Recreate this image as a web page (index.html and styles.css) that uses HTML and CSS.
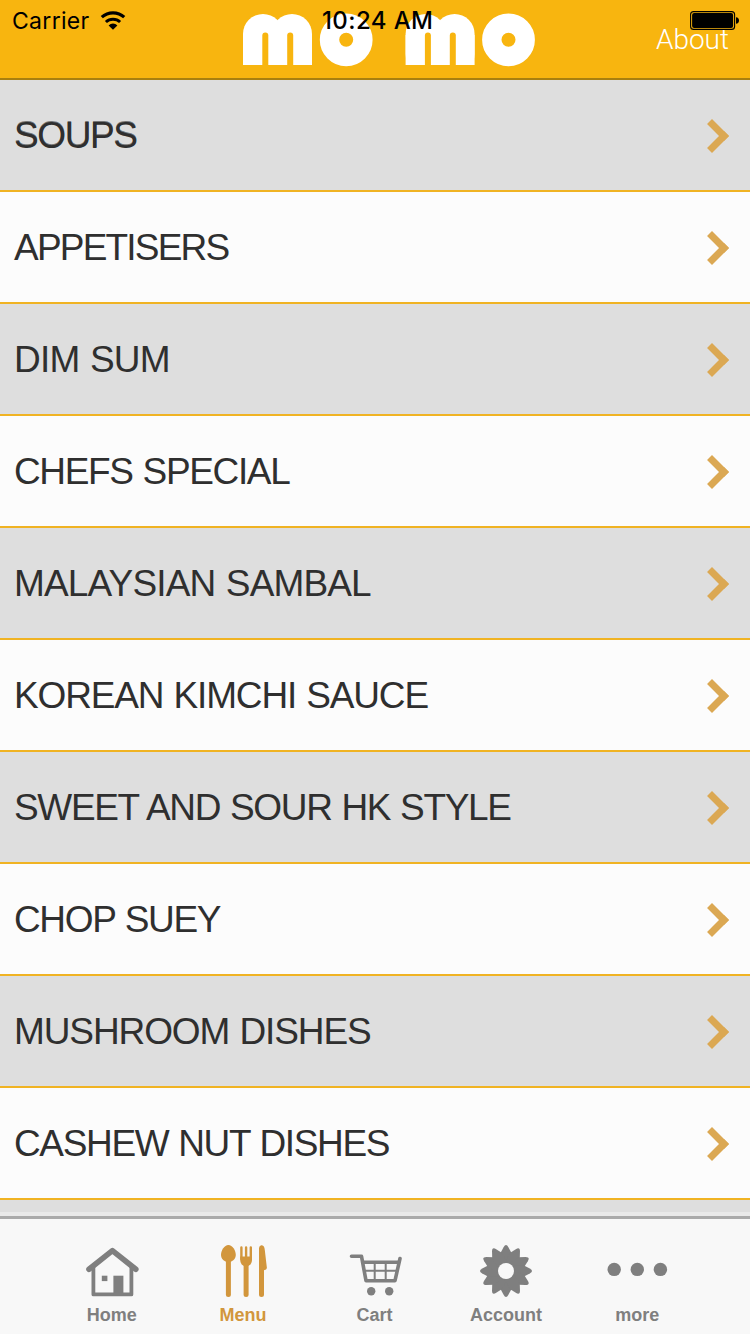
FILE: index.html
```
<!DOCTYPE html>
<html lang="en">
<head>
  <meta charset="UTF-8">
  <title>Momo Menu</title>
  <link rel="stylesheet" href="styles.css">
</head>
<body>

  <div class="app">
    <header class="navbar">
      <svg class="logo" width="293" height="54" viewBox="0 0 293 54" role="img" aria-label="momo">
        <defs>
          <g id="arch">
            <rect x="0" y="1" width="40" height="60" rx="20" fill="#fff"/>
            <rect x="29" y="1" width="40" height="60" rx="20" fill="#fff"/>
            <rect x="0" y="22" width="69" height="30" fill="#fff"/>
            <rect x="19.3" y="19.5" width="6" height="42" rx="3" fill="#f8b50f"/>
            <rect x="44.2" y="19.5" width="6" height="42" rx="3" fill="#f8b50f"/>
            <rect x="-1" y="52" width="71" height="10" fill="#f8b50f"/>
          </g>
        </defs>
        <use href="#arch"/>
        <circle cx="103.2" cy="26.8" r="16.7" fill="none" stroke="#fff" stroke-width="19.4"/>
        <use href="#arch" x="162.6"/>
        <circle cx="265.5" cy="26.8" r="16.7" fill="none" stroke="#fff" stroke-width="19.4"/>
      </svg>
      <a class="about">About</a>
    </header>

    <div class="statusbar">
      <span class="carrier">Carrier</span>
      <svg class="wifi" width="26" height="20" viewBox="0 0 26 20">
        <path d="M1.8 6.2A16.5 16.5 0 0 1 24.2 6.2" fill="none" stroke="#000" stroke-width="3.2"/>
        <path d="M5.9 11A10.4 10.4 0 0 1 20.1 11" fill="none" stroke="#000" stroke-width="3"/>
        <path d="M8.6 14.4A6.2 6.2 0 0 1 17.4 14.4L13 18.8Z" fill="#000"/>
      </svg>
      <span class="time">10:24 AM</span>
      <svg class="battery" width="49" height="20" viewBox="0 0 49 20">
        <rect x="0.6" y="0.6" width="44" height="17.8" rx="3" fill="none" stroke="#000" stroke-width="1.1"/>
        <rect x="2.1" y="2.1" width="41" height="14.8" rx="2" fill="#000"/>
        <path d="M46 6.2Q49 6.5 49 9.5T46 12.8Z" fill="#000"/>
      </svg>
    </div>

    <ul class="menu">
      <li class="row soups"><span>SOUPS</span><i class="chevron"></i></li>
      <li class="row appetisers"><span>APPETISERS</span><i class="chevron"></i></li>
      <li class="row dimsum"><span>DIM SUM</span><i class="chevron"></i></li>
      <li class="row chefs"><span>CHEFS SPECIAL</span><i class="chevron"></i></li>
      <li class="row sambal"><span>MALAYSIAN SAMBAL</span><i class="chevron"></i></li>
      <li class="row kimchi"><span>KOREAN KIMCHI SAUCE</span><i class="chevron"></i></li>
      <li class="row sweet"><span>SWEET AND SOUR HK STYLE</span><i class="chevron"></i></li>
      <li class="row suey"><span>CHOP SUEY</span><i class="chevron"></i></li>
      <li class="row mushroom"><span>MUSHROOM DISHES</span><i class="chevron"></i></li>
      <li class="row cashew"><span>CASHEW NUT DISHES</span><i class="chevron"></i></li>
      <li class="row"></li>
    </ul>

    <nav class="tabbar">
      <a class="tab">
        <svg class="icon" viewBox="0 0 60 60">
          <path d="M7 29.3L30.4 10.6L53.8 29.3" fill="none" stroke="currentColor" stroke-width="5.6" stroke-linecap="round" stroke-linejoin="round"/>
          <path d="M11.4 27V54.4H49.4V27" fill="none" stroke="currentColor" stroke-width="3.8" stroke-linejoin="round"/>
          <rect x="19.8" y="35.7" width="5.6" height="5.4" fill="currentColor"/>
          <rect x="31.4" y="35.7" width="10" height="19" fill="currentColor"/>
        </svg>
        <span>Home</span>
      </a>
      <a class="tab active">
        <svg class="icon" viewBox="0 0 60 60">
          <path d="M15.4 5C19.4 5 22.8 10.5 22.8 14.8C22.8 19 19.4 22 15.4 22.3C11.4 22 8 19 8 14.8C8 10.5 11.4 5 15.4 5Z" fill="currentColor"/>
          <rect x="12.9" y="18" width="5" height="39" rx="2.5" fill="currentColor"/>
          <path d="M28.4 7.5V19M33.1 7.5V19M37.8 7.5V19" stroke="currentColor" stroke-width="2.4" stroke-linecap="round"/>
          <path d="M27.2 16.5H39V20Q39 25.5 33.1 26.5Q27.2 25.5 27.2 20Z" fill="currentColor"/>
          <rect x="30.6" y="22" width="5" height="35" rx="2.5" fill="currentColor"/>
          <path d="M46 8Q46.4 5 48.9 5.3Q51.4 5.6 51.8 10L53.9 28Q53.7 30 51 30.2V54.5A2.5 2.5 0 0 1 46 54.5Z" fill="currentColor"/>
        </svg>
        <span>Menu</span>
      </a>
      <a class="tab">
        <svg class="icon" viewBox="0 0 60 60">
          <path d="M6.5 16.3H16.5L21 40.7H50L55 18.5" fill="none" stroke="currentColor" stroke-width="3.6" stroke-linecap="round" stroke-linejoin="round"/>
          <path d="M18 22.3H54" stroke="currentColor" stroke-width="3.4"/>
          <path d="M19 30.7H52M29.7 22V40M40.7 22V40" stroke="currentColor" stroke-width="2"/>
          <circle cx="26.2" cy="51.3" r="4.2" fill="currentColor"/>
          <circle cx="44.2" cy="51.3" r="4.2" fill="currentColor"/>
        </svg>
        <span>Cart</span>
      </a>
      <a class="tab">
        <svg class="icon" viewBox="0 0 60 60">
          <defs>
            <path id="tooth" d="M24.5 13L27.6 7.2Q30 2.8 32.4 7.2L35.5 13V49L32.4 54.8Q30 59.2 27.6 54.8L24.5 49Z"/>
          </defs>
          <g fill="currentColor">
            <use href="#tooth"/>
            <use href="#tooth" transform="rotate(30 30 31)"/>
            <use href="#tooth" transform="rotate(60 30 31)"/>
            <use href="#tooth" transform="rotate(90 30 31)"/>
            <use href="#tooth" transform="rotate(120 30 31)"/>
            <use href="#tooth" transform="rotate(150 30 31)"/>
          </g>
          <circle cx="30" cy="31" r="8" fill="#f8f8f8"/>
        </svg>
        <span>Account</span>
      </a>
      <a class="tab">
        <svg class="icon" viewBox="0 0 60 60">
          <circle cx="7.2" cy="29.4" r="6.7" fill="currentColor"/>
          <circle cx="30.3" cy="29.4" r="6.7" fill="currentColor"/>
          <circle cx="53.4" cy="29.4" r="6.7" fill="currentColor"/>
        </svg>
        <span>more</span>
      </a>
    </nav>
  </div>

</body>
</html>
```
FILE: styles.css
```
* {
  margin: 0;
  padding: 0;
  box-sizing: border-box;
}

body {
  font-family: 'Liberation Sans', Arial, sans-serif;
  background: #fcfcfc;
  color: #2f2f2f;
}

.app {
  position: relative;
  width: 750px;
  height: 1334px;
  display: flex;
  flex-direction: column;
  overflow: hidden;
}

.navbar {
  flex: none;
  height: 80px;
  padding: 13px 21px 0 243px;
  display: flex;
  justify-content: space-between;
  align-items: flex-start;
  background: #f8b50f;
  border-bottom: 2px solid #a9800f;
}

.about {
  font-family: Roboto, sans-serif;
  font-weight: 300;
  font-size: 28px;
  line-height: 32px;
  margin-top: 11px;
  color: #fff;
}

/* status bar lies over the navbar */
.statusbar {
  position: absolute;
  top: 0;
  left: 0;
  width: 750px;
  height: 41px;
  padding: 0 11px 0 12px;
  display: flex;
  align-items: center;
  font-family: Inter, sans-serif;
  font-size: 23px;
  color: #000;
}

.carrier {
  width: 88px;
  letter-spacing: 0.3px;
}

.time {
  margin-left: 196px;
  font-size: 24px;
  line-height: 28px;
  font-weight: 500;
  letter-spacing: 0.4px;
  white-space: nowrap;
}

.battery {
  margin-left: auto;
}

.menu {
  flex: 1;
  min-height: 0;
  list-style: none;
  overflow: hidden;
}

.row {
  height: 112px;
  padding: 2px 22px 0 14px;
  display: flex;
  align-items: center;
  justify-content: space-between;
  font-size: 37px;
  letter-spacing: -1.35px;
  word-spacing: 1px;
  background: #fcfcfc;
  border-bottom: 2px solid #f0b323;
}

.row:nth-child(odd) {
  background: #dedede;
}

.soups {
  letter-spacing: -1.4px;
  text-shadow: 0 -1.5px 0 rgba(47, 47, 47, 0.6);
}

.appetisers {
  letter-spacing: -1.8px;
}

.dimsum {
  letter-spacing: -0.8px;
}

.chefs {
  letter-spacing: -1.35px;
}

.sambal {
  letter-spacing: -0.85px;
}

.kimchi {
  letter-spacing: -1.15px;
}

.mushroom {
  letter-spacing: -1.1px;
}

.chevron {
  width: 24px;
  height: 24px;
  border-top: 7.5px solid #dba853;
  border-right: 7.5px solid #dba853;
  transform: translateX(-4px) rotate(45deg);
}

.tabbar {
  flex: none;
  height: 118px;
  padding: 21px 47px 0 46px;
  display: flex;
  background: #f8f8f8;
  border-top: 3px solid #aaa;
  outline: 4px solid #e9e9e9;
}

.tab {
  flex: 1;
  display: flex;
  flex-direction: column;
  align-items: center;
  font-size: 18px;
  font-weight: bold;
  line-height: 20px;
  color: #7f7f7f;
}

.tab.active {
  color: #d2963c;
}

.icon {
  width: 60px;
  height: 60px;
  margin-bottom: 5px;
  overflow: visible;
}
```
